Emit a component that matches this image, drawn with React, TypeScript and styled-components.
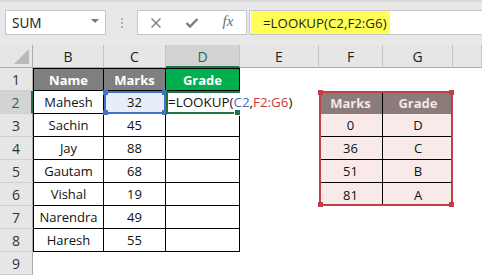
import React from "react";
import styled, { createGlobalStyle, css } from "styled-components";

const GlobalStyle = createGlobalStyle`
  html, body { margin: 0; padding: 0; background: #fff; }
  body { font-family: "Open Sans", "Liberation Sans", sans-serif; }
`;

const COLS = [33, 71, 62, 74, 79, 64, 70, 29];
const ROW_H = 23;
const LETTERS = ["B", "C", "D", "E", "F", "G", ""];

const Page = styled.div`
  width: 482px;
  height: 276px;
  overflow: hidden;
  background: #fff;
  display: flex;
  flex-direction: column;
`;

const Toolbar = styled.div`
  height: 45px;
  flex: none;
  box-sizing: border-box;
  background: #e8e8e8;
  border-top: 2px solid #dadada;
  display: flex;
  align-items: flex-start;
  padding: 8px 0 0 5px;
`;

const NameBox = styled.div`
  width: 101px;
  height: 25px;
  box-sizing: border-box;
  background: #fff;
  border: 1px solid #c6c6c6;
  display: flex;
  align-items: center;
  justify-content: space-between;
  padding: 0 6px 0 6px;
  font-family: "Noto Sans", "Open Sans", sans-serif;
  font-size: 13.5px;
  color: #262626;
`;

const Caret = styled.span`
  width: 0;
  height: 0;
  border-left: 4px solid transparent;
  border-right: 4px solid transparent;
  border-top: 4px solid #777;
  margin-top: -4px;
`;

const Grip = styled.div`
  width: 31px;
  height: 25px;
  display: flex;
  flex-direction: column;
  align-items: center;
  justify-content: center;
  gap: 2px;
`;

const GripDot = styled.span`
  width: 2px;
  height: 2px;
  background: #b2b2b2;
`;

const FxBox = styled.div`
  width: 110px;
  height: 25px;
  box-sizing: border-box;
  background: #fff;
  border: 1px solid #c6c6c6;
  display: grid;
  grid-template-columns: repeat(3, 36px);
  align-items: center;
  justify-items: center;
`;

const FxText = styled.span`
  font-family: "Liberation Serif", "DejaVu Serif", serif;
  font-style: italic;
  font-size: 15px;
  color: #6e6e6e;
  margin-top: -2px;
`;

const FormulaInput = styled.div`
  flex: 1;
  height: 25px;
  margin-left: 2px;
  box-sizing: border-box;
  background: #fff;
  border: 1px solid #c6c6c6;
  border-right: none;
  display: flex;
  align-items: stretch;
  padding-left: 1px;
`;

const Highlight = styled.span`
  background: #ffff55;
  display: flex;
  align-items: center;
  padding: 0 3px 0 12px;
  font-size: 13.3px;
  color: #1e1e1e;
  white-space: nowrap;
`;

const Sheet = styled.div`
  position: relative;
  display: grid;
  grid-template-columns: ${COLS.map((c) => `${c}px`).join(" ")};
  grid-auto-rows: ${ROW_H}px;
`;

const Corner = styled.div`
  background: #e6e6e6;
  border-right: 1px solid #ababab;
  border-bottom: 1px solid #ababab;
  box-sizing: border-box;
  display: flex;
  align-items: flex-end;
  justify-content: flex-end;
  padding: 0 3px 3px 0;
`;

const CornerTri = styled.span`
  width: 0;
  height: 0;
  border-left: 15px solid transparent;
  border-bottom: 15px solid #b9b9b9;
`;

const ColHead = styled.div<{ $active?: boolean }>`
  box-sizing: border-box;
  background: ${(p) => (p.$active ? "#d3d3d3" : "#e6e6e6")};
  border-right: 1px solid #c4c4c4;
  border-bottom: ${(p) => (p.$active ? "2px solid #217346" : "1px solid #ababab")};
  display: flex;
  align-items: center;
  justify-content: center;
  font-size: 14px;
  color: ${(p) => (p.$active ? "#1d6b4a" : "#222")};
  padding-top: ${(p) => (p.$active ? "1px" : "0")};
`;

const RowHead = styled.div<{ $active?: boolean }>`
  box-sizing: border-box;
  background: ${(p) => (p.$active ? "#d3d3d3" : "#e6e6e6")};
  border-right: ${(p) => (p.$active ? "2px solid #217346" : "1px solid #ababab")};
  border-bottom: 1px solid #cfcfcf;
  display: flex;
  align-items: center;
  justify-content: center;
  font-size: 14px;
  color: ${(p) => (p.$active ? "#1d6b4a" : "#333")};
`;

type Variant = "plain" | "hdr" | "green" | "sel" | "lkHdr" | "lk";

const bgFor: Record<Variant, string> = {
  plain: "transparent",
  hdr: "#7f7f7f",
  green: "#00b050",
  sel: "#e8eef8",
  lkHdr: "#8b7b7b",
  lk: "#f9eaea",
};

const Cell = styled.div<{
  $v: Variant;
  $left?: boolean;
  $top?: boolean;
  $right?: boolean;
  $bottom?: boolean;
}>`
  box-sizing: border-box;
  background: ${(p) => bgFor[p.$v]};
  display: flex;
  align-items: center;
  justify-content: center;
  font-size: 13px;
  white-space: nowrap;
  color: #111;
  ${(p) =>
    (p.$v === "hdr" || p.$v === "green") &&
    css`
      color: #fff;
      font-weight: 700;
    `}
  ${(p) =>
    p.$v === "lkHdr" &&
    css`
      color: #f3e8e8;
      font-weight: 700;
    `}
  ${(p) => p.$right && "border-right: 1px solid #000;"}
  ${(p) => p.$bottom && "border-bottom: 1px solid #000;"}
  ${(p) => p.$left && "border-left: 1px solid #000;"}
  ${(p) => p.$top && "border-top: 1px solid #000;"}
`;

const EditCell = styled.div`
  position: relative;
  z-index: 3;
  box-sizing: border-box;
  border-right: 1px solid #000;
  border-bottom: 1px solid #000;
  display: flex;
  align-items: center;
  overflow: visible;
  padding-left: 2px;
`;

const EditText = styled.span`
  font-size: 13.4px;
  color: #111;
  white-space: nowrap;
  background: #fff;
  padding-right: 2px;
`;

const Ref = styled.span<{ $c: string }>`
  color: ${(p) => p.$c};
`;

const RangeBox = styled.div<{ $color: string }>`
  position: absolute;
  box-sizing: border-box;
  border: 2px solid ${(p) => p.$color};
  pointer-events: none;
  z-index: 4;
`;

const ActiveBox = styled.div`
  position: absolute;
  box-sizing: border-box;
  border: 2px solid #217346;
  border-right: none;
  pointer-events: none;
  z-index: 5;
`;

const Handle = styled.span<{ $color: string; $x: "l" | "r"; $y: "t" | "b" }>`
  position: absolute;
  width: 5px;
  height: 5px;
  background: ${(p) => p.$color};
  ${(p) => (p.$x === "l" ? "left: -3px;" : "right: -3px;")}
  ${(p) => (p.$y === "t" ? "top: -3px;" : "bottom: -3px;")}
`;

const FillHandle = styled.span`
  position: absolute;
  width: 5px;
  height: 5px;
  background: #217346;
  border: 1px solid #fff;
  right: -1px;
  bottom: -4px;
`;

const colX = (i: number) => COLS.slice(0, i).reduce((a, b) => a + b, 0);
const rect = (col: number, row: number, cs: number, rs: number) => ({
  left: colX(col),
  top: row * ROW_H,
  width: COLS.slice(col, col + cs).reduce((a, b) => a + b, 0),
  height: rs * ROW_H,
});

const students: [string, string][] = [
  ["Mahesh", "32"],
  ["Sachin", "45"],
  ["Jay", "88"],
  ["Gautam", "68"],
  ["Vishal", "19"],
  ["Narendra", "49"],
  ["Haresh", "55"],
];

const lookup: [string, string][] = [
  ["0", "D"],
  ["36", "C"],
  ["51", "B"],
  ["81", "A"],
];

const Corners = ({ color }: { color: string }) => (
  <>
    <Handle $color={color} $x="l" $y="t" />
    <Handle $color={color} $x="r" $y="t" />
    <Handle $color={color} $x="l" $y="b" />
    <Handle $color={color} $x="r" $y="b" />
  </>
);

const Formula = () => (
  <>
    =LOOKUP(<Ref $c="#3f6fc6">C2</Ref>,<Ref $c="#c8393f">F2:G6</Ref>)
  </>
);

export default function App() {
  const rows: React.ReactNode[] = [];
  for (let r = 1; r <= 9; r++) {
    const cells: React.ReactNode[] = [];
    cells.push(
      <RowHead key={`h${r}`} $active={r === 2}>
        {r}
      </RowHead>
    );
    if (r === 1) {
      cells.push(<Cell key="b" $v="hdr" $left $top $right $bottom>Name</Cell>);
      cells.push(<Cell key="c" $v="hdr" $top $right $bottom>Marks</Cell>);
      cells.push(<Cell key="d" $v="green" $top $right $bottom>Grade</Cell>);
    } else if (r <= 8) {
      const [name, mark] = students[r - 2];
      cells.push(<Cell key="b" $v="plain" $left $right $bottom>{name}</Cell>);
      cells.push(
        <Cell key="c" $v={r === 2 ? "sel" : "plain"} $right $bottom>
          {mark}
        </Cell>
      );
      if (r === 2) {
        cells.push(
          <EditCell key="d">
            <EditText>
              <Formula />
            </EditText>
          </EditCell>
        );
      } else {
        cells.push(<Cell key="d" $v="plain" $right $bottom />);
      }
    } else {
      cells.push(<Cell key="b" $v="plain" />);
      cells.push(<Cell key="c" $v="plain" />);
      cells.push(<Cell key="d" $v="plain" />);
    }
    cells.push(<Cell key="e" $v="plain" />);
    if (r === 2) {
      cells.push(<Cell key="f" $v="lkHdr" $right>Marks</Cell>);
      cells.push(<Cell key="g" $v="lkHdr">Grade</Cell>);
    } else if (r >= 3 && r <= 6) {
      const [m, g] = lookup[r - 3];
      const last = r === 6;
      cells.push(<Cell key="f" $v="lk" $right $bottom={!last}>{m}</Cell>);
      cells.push(<Cell key="g" $v="lk" $bottom={!last}>{g}</Cell>);
    } else {
      cells.push(<Cell key="f" $v="plain" />);
      cells.push(<Cell key="g" $v="plain" />);
    }
    cells.push(<Cell key="h" $v="plain" />);
    rows.push(<React.Fragment key={r}>{cells}</React.Fragment>);
  }

  const blue = rect(2, 2, 1, 1);
  const red = rect(5, 2, 2, 5);
  const active = rect(3, 2, 1, 1);

  return (
    <Page>
      <GlobalStyle />
      <Toolbar>
        <NameBox>
          <span>SUM</span>
          <Caret />
        </NameBox>
        <Grip>
          <GripDot />
          <GripDot />
          <GripDot />
        </Grip>
        <FxBox>
          <svg width="12" height="12" viewBox="0 0 12 12">
            <path d="M1.5 1.5 L10.5 10.5 M10.5 1.5 L1.5 10.5" stroke="#7b7b7b" strokeWidth="1.4" fill="none" />
          </svg>
          <svg width="14" height="12" viewBox="0 0 14 12">
            <path d="M1.5 6 L5 9.5 L12.5 2" stroke="#7b7b7b" strokeWidth="2.4" fill="none" />
          </svg>
          <FxText>fx</FxText>
        </FxBox>
        <FormulaInput>
          <Highlight>=LOOKUP(C2,F2:G6)</Highlight>
        </FormulaInput>
      </Toolbar>
      <Sheet>
        <Corner>
          <CornerTri />
        </Corner>
        {LETTERS.map((l, i) => (
          <ColHead key={i} $active={l === "D"}>
            {l}
          </ColHead>
        ))}
        {rows}
        <RangeBox $color="#4472c4" style={blue}>
          <Corners color="#4472c4" />
        </RangeBox>
        <RangeBox $color="#c0404a" style={red}>
          <Corners color="#c0404a" />
        </RangeBox>
        <ActiveBox style={active}>
          <FillHandle />
        </ActiveBox>
      </Sheet>
    </Page>
  );
}
